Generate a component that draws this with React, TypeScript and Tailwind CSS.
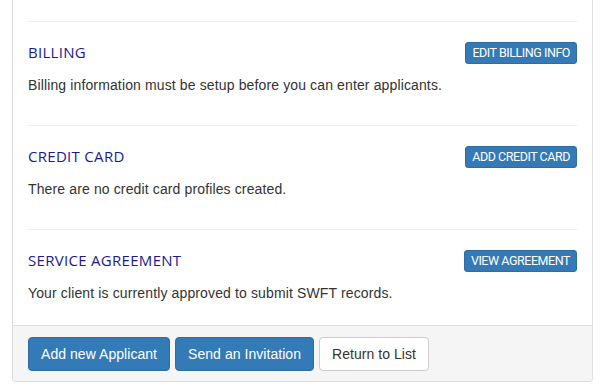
import React from "react";

const sections = [
  { title: "BILLING", btn: "EDIT BILLING INFO", text: "Billing information must be setup before you can enter applicants." },
  { title: "CREDIT CARD", btn: "ADD CREDIT CARD", text: "There are no credit card profiles created." },
  { title: "SERVICE AGREEMENT", btn: "VIEW AGREEMENT", text: "Your client is currently approved to submit SWFT records." },
];

export default function App() {
  return (
    <div className="w-[601px] h-[389px] bg-white overflow-hidden pl-[12px]" style={{ fontFamily: '"Liberation Sans", Arial, sans-serif' }}>
      <div className="w-[581px] border-x border-b border-[#dddddd] rounded-b-[4px] bg-white">
        <div className="px-[15px] pt-[21px]">
          {sections.map((s, i) => (
            <div key={s.title} className="border-t border-[#eeeeee] pt-[20px] pb-[22px]">
              <div className="flex items-center justify-between h-[21px]">
                <h3
                  className="text-[15px] leading-[21px] tracking-[0.3px] text-[#1a1a90] m-0 font-normal"
                  style={{ fontFamily: '"Open Sans", sans-serif' }}
                >
                  {s.title}
                </h3>
                <button
                  className="h-[22px] px-[6px] text-[12.5px] leading-[20px] tracking-[-0.45px] text-white bg-[#337ab7] border border-[#2e6da4] rounded-[3px]"
                  style={{ fontFamily: 'Roboto, sans-serif' }}
                >
                  {s.btn}
                </button>
              </div>
              <p className="mt-[12px] text-[14px] leading-[20px] tracking-[0.13px] text-[#333333]">{s.text}</p>
              {i < sections.length - 1 && <div className="h-[8px]" />}
            </div>
          ))}
        </div>
        <div className="bg-[#f5f5f5] border-t border-[#dddddd] rounded-b-[3px] px-[15px] pt-[11px] pb-[10px] flex gap-[5px] tracking-[0.05px]">
          <button className="h-[34px] px-[12px] text-[14px] text-white bg-[#337ab7] border border-[#2e6da4] rounded-[4px]">
            Add new Applicant
          </button>
          <button className="h-[34px] px-[12px] text-[14px] text-white bg-[#337ab7] border border-[#2e6da4] rounded-[4px]">
            Send an Invitation
          </button>
          <button className="h-[34px] px-[12px] text-[14px] text-[#333333] bg-white border border-[#cccccc] rounded-[4px]">
            Return to List
          </button>
        </div>
      </div>
    </div>
  );
}
